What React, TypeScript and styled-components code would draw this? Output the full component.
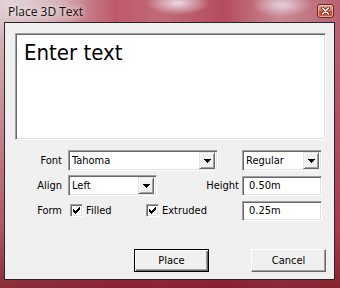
import React from 'react';
import styled, { createGlobalStyle, css } from 'styled-components';

const Global = createGlobalStyle`
  html, body { margin: 0; padding: 0; }
  body { width: 340px; height: 288px; overflow: hidden; background: #fff; }
`;

const UI = `"DejaVu Sans Condensed", "Liberation Sans", sans-serif`;

const sunken = css`
  box-sizing: border-box;
  border-style: solid;
  border-width: 1px;
  border-color: #a0a0a0 #ffffff #ffffff #a0a0a0;
  box-shadow: inset 1px 1px 0 #696969, inset -1px -1px 0 #e3e3e3;
  background: #ffffff;
`;

const raised = css`
  box-sizing: border-box;
  border-style: solid;
  border-width: 1px;
  border-color: #e3e3e3 #696969 #696969 #e3e3e3;
  box-shadow: inset 1px 1px 0 #ffffff, inset -1px -1px 0 #a0a0a0;
  background: #f0f0f0;
`;

const Window = styled.div`
  width: 340px;
  height: 288px;
  box-sizing: border-box;
  display: flex;
  flex-direction: column;
  padding: 0 5px 8px 4px;
  background:
    radial-gradient(ellipse 32px 12px at 178px 3px, rgba(236, 226, 236, 0.95), rgba(236, 226, 236, 0) 100%),
    radial-gradient(ellipse 30px 12px at 282px 5px, rgba(232, 222, 232, 0.85), rgba(232, 222, 232, 0) 100%),
    radial-gradient(ellipse 80px 40px at 10px 0px, rgba(226, 214, 218, 0.95), rgba(226, 214, 218, 0) 100%),
    linear-gradient(to bottom, rgba(160, 40, 60, 0) 0px, rgba(160, 40, 60, 0) 30px, rgba(160, 42, 60, 0.7) 230px, rgba(130, 28, 42, 0.9) 288px),
    linear-gradient(to right, #d6b6ba 0%, #cf9aa2 18%, #bd5a69 34%, #c26a77 48%, #b44c5c 66%, #c98892 82%, #b86272 100%);
`;

const TitleBar = styled.div`
  height: 22px;
  display: flex;
  align-items: center;
  justify-content: space-between;
  padding: 0 1px 0 4px;
`;

const Title = styled.span`
  font-family: "Open Sans", "Liberation Sans", sans-serif;
  font-size: 12px;
  color: #111;
  text-shadow: 0 0 6px rgba(255, 255, 255, 0.9), 0 0 10px rgba(255, 255, 255, 0.6);
`;

const CloseButton = styled.div`
  width: 17px;
  height: 14px;
  box-sizing: border-box;
  border: 1px solid #6a2a22;
  border-radius: 3px;
  background: linear-gradient(to bottom, #e6a497 0%, #d27a66 45%, #c34a32 55%, #d46a50 100%);
  box-shadow: inset 0 0 0 1px rgba(255, 220, 210, 0.55);
  display: flex;
  align-items: center;
  justify-content: center;
`;

const Client = styled.div`
  flex: 1;
  box-sizing: border-box;
  border: 1px solid #262626;
  background: #f0f0f0;
  display: flex;
  flex-direction: column;
  padding: 10px 8px 7px 10px;
  font-family: ${UI};
  font-size: 11px;
  color: #000;
`;

const TextBox = styled.div`
  ${sunken};
  height: 107px;
  padding: 6px 8px;
  font-family: ${UI};
  font-size: 22px;
  line-height: 26px;
`;

const Form = styled.div`
  margin-top: 10px;
  display: grid;
  grid-template-columns: 53px 174px 80px;
  grid-auto-rows: 21px;
  row-gap: 4px;
  align-items: center;
`;

const Label = styled.span`
  text-align: right;
  padding-right: 6px;
  white-space: nowrap;
`;

const Combo = styled.div<{ $w: number }>`
  ${sunken};
  width: ${(p) => p.$w}px;
  height: 21px;
  display: flex;
  align-items: center;
  padding: 2px 2px 2px 3px;
`;

const ComboText = styled.span`
  flex: 1;
  white-space: nowrap;
`;

const DropButton = styled.div`
  ${raised};
  width: 16px;
  height: 17px;
  display: flex;
  align-items: center;
  justify-content: center;
`;

const Field = styled.div`
  ${sunken};
  width: 80px;
  height: 20px;
  display: flex;
  align-items: center;
  padding-left: 6px;
`;

const MidCell = styled.div`
  display: flex;
  align-items: center;
  height: 100%;
`;

const SideLabel = styled.span`
  margin-left: auto;
  padding-right: 3px;
`;

const Check = styled.label<{ $w: number }>`
  display: flex;
  align-items: center;
  gap: 3px;
  width: ${(p) => p.$w}px;
  padding-left: 2px;
  box-sizing: border-box;
`;

const CheckBox = styled.span`
  ${sunken};
  width: 13px;
  height: 13px;
  display: flex;
  align-items: center;
  justify-content: center;
`;

const Buttons = styled.div`
  margin-top: auto;
  display: flex;
  justify-content: flex-end;
  gap: 42px;
`;

const Button = styled.div<{ $default?: boolean }>`
  width: 75px;
  height: 23px;
  box-sizing: border-box;
  display: flex;
  align-items: center;
  justify-content: center;
  background: #f0f0f0;
  ${(p) =>
    p.$default
      ? css`
          border: 1px solid #000;
          box-shadow: inset 1px 1px 0 #ffffff, inset -1px -1px 0 #696969, inset -2px -2px 0 #a0a0a0;
        `
      : css`
          border-style: solid;
          border-width: 1px;
          border-color: #ffffff #696969 #696969 #ffffff;
          box-shadow: inset -1px -1px 0 #a0a0a0;
        `}
`;

const Arrow = () => (
  <svg width="7" height="4" viewBox="0 0 7 4" shapeRendering="crispEdges">
    <path d="M0 0h7v1h-1v1h-1v1h-1v1h-1v-1h-1v-1h-1v-1h-1z" fill="#000" />
  </svg>
);

const CHECK_PIXELS: [number, number, number][] = [
  [0, 6, 1],
  [1, 5, 2],
  [2, 0, 1],
  [2, 4, 3],
  [3, 0, 2],
  [3, 3, 3],
  [4, 0, 5],
  [5, 1, 3],
  [6, 2, 1],
];

const CheckMark = () => (
  <svg width="7" height="7" viewBox="0 0 7 7" shapeRendering="crispEdges">
    {CHECK_PIXELS.map(([y, x, w], i) => (
      <rect key={i} x={x} y={y} width={w} height={1} fill="#000" />
    ))}
  </svg>
);

const CloseGlyph = () => (
  <svg width="9" height="8" viewBox="0 0 9 8">
    <path d="M1.5 1 L7.5 7 M7.5 1 L1.5 7" stroke="#5a1a12" strokeWidth="3" strokeLinecap="round" />
    <path d="M1.5 1 L7.5 7 M7.5 1 L1.5 7" stroke="#ffffff" strokeWidth="1.6" strokeLinecap="round" />
  </svg>
);

export default function App() {
  return (
    <>
      <Global />
      <Window>
        <TitleBar>
          <Title>Place 3D Text</Title>
          <CloseButton>
            <CloseGlyph />
          </CloseButton>
        </TitleBar>
        <Client>
          <TextBox>Enter text</TextBox>
          <Form>
            <Label>Font</Label>
            <MidCell>
              <Combo $w={150}>
                <ComboText>Tahoma</ComboText>
                <DropButton>
                  <Arrow />
                </DropButton>
              </Combo>
            </MidCell>
            <Combo $w={80}>
              <ComboText>Regular</ComboText>
              <DropButton>
                <Arrow />
              </DropButton>
            </Combo>

            <Label>Align</Label>
            <MidCell>
              <Combo $w={89}>
                <ComboText>Left</ComboText>
                <DropButton>
                  <Arrow />
                </DropButton>
              </Combo>
              <SideLabel>Height</SideLabel>
            </MidCell>
            <Field>0.50m</Field>

            <Label>Form</Label>
            <MidCell>
              <Check $w={76}>
                <CheckBox>
                  <CheckMark />
                </CheckBox>
                Filled
              </Check>
              <Check $w={90}>
                <CheckBox>
                  <CheckMark />
                </CheckBox>
                Extruded
              </Check>
            </MidCell>
            <Field>0.25m</Field>
          </Form>
          <Buttons>
            <Button $default>Place</Button>
            <Button>Cancel</Button>
          </Buttons>
        </Client>
      </Window>
    </>
  );
}
